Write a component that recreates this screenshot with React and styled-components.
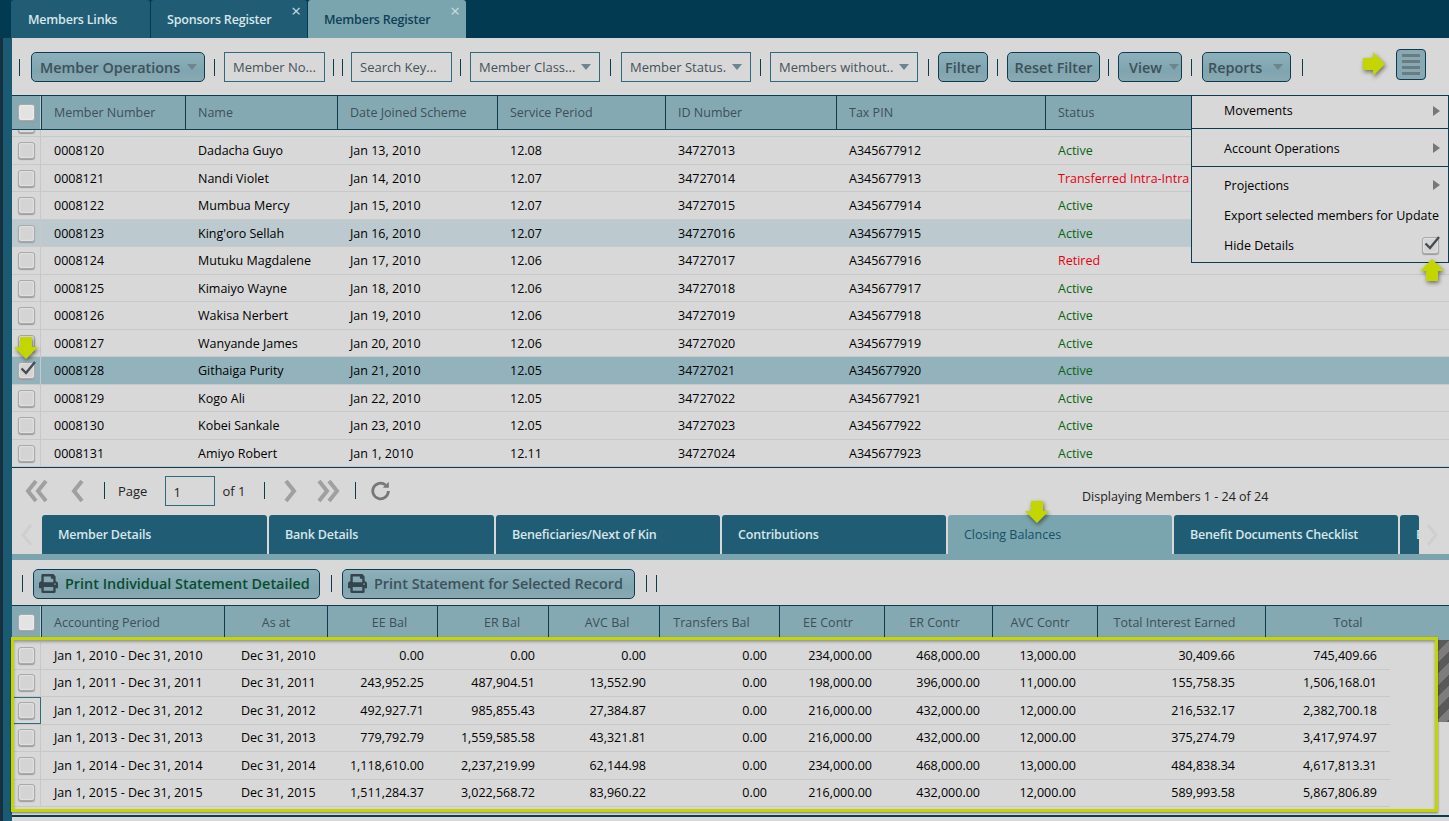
import React from "react";
import styled, { createGlobalStyle } from "styled-components";
import { FaPrint } from "react-icons/fa";

const ink = "#0d3b4f";
const head = "#84a9b3";
const panel = "#d8d8d8";

const GlobalStyle = createGlobalStyle`
  html, body { margin: 0; padding: 0; background: ${panel}; }
  body { font-family: "Open Sans", "Liberation Sans", sans-serif; font-size: 12.5px; color: #000; overflow: hidden; }
`;

const Page = styled.div`
  position: relative;
  width: 1449px;
  height: 821px;
  overflow: hidden;
  display: grid;
  grid-template-columns: 12px 1fr;
  grid-template-rows: 38px 1fr;
  background: ${panel};
`;
const TopBar = styled.div`
  grid-column: 1 / 3;
  display: flex;
  align-items: stretch;
  background: #023a52;
  padding-left: 11px;
`;
const TopTab = styled.div`
  position: relative;
  width: ${(p) => p.$w}px;
  margin-right: 1px;
  padding-left: ${(p) => p.$pl ?? 16}px;
  box-sizing: border-box;
  display: flex;
  align-items: center;
  font-size: 12.5px;
  font-weight: 600;
  letter-spacing: -0.2px;
  border-radius: 3px 3px 0 0;
  background: ${(p) => (p.$active ? "#7ba5ae" : "#205d74")};
  color: ${(p) => (p.$active ? "#0f3f58" : "#d7e6ea")};
`;
const CloseX = styled.span`
  position: absolute;
  top: 2px;
  right: 6px;
  font-size: 17px;
  line-height: 18px;
  font-weight: 400;
  letter-spacing: 0;
  color: #c9dde2;
`;
const Strip = styled.div`
  background: linear-gradient(90deg, #16303f 0 3px, #1a5a72 3px 100%);
`;
const Main = styled.div`
  display: flex;
  flex-direction: column;
  min-width: 0;
`;
const Toolbar = styled.div`
  height: ${(p) => p.$h}px;
  flex: none;
  display: flex;
  align-items: center;
  padding-left: ${(p) => p.$pad}px;
  padding-top: ${(p) => p.$top ?? 0}px;
  box-sizing: border-box;
`;
const Sep = styled.span`
  width: 1px;
  height: 17px;
  flex: none;
  background: ${ink};
  margin-left: ${(p) => p.$l ?? 9}px;
  margin-right: ${(p) => p.$r ?? 9}px;
`;
const Button = styled.div`
  width: ${(p) => p.$w}px;
  height: 30px;
  flex: none;
  box-sizing: border-box;
  display: flex;
  align-items: center;
  justify-content: ${(p) => p.$justify || "center"};
  gap: 7px;
  padding: 0 ${(p) => p.$pad ?? 0}px;
  border: 1px solid ${ink};
  border-radius: 5px;
  background: linear-gradient(180deg, #8db1bb 0%, #7fa5b0 62%, #8aa9b2 100%);
  font-size: 14.4px;
  font-weight: 600;
  color: ${(p) => p.$color || "#3f5058"};
  white-space: nowrap;
`;
const Caret = styled.span`
  width: 0;
  height: 0;
  border-left: 5px solid transparent;
  border-right: 5px solid transparent;
  border-top: 6px solid ${(p) => p.$color || "#6d858d"};
  flex: none;
`;
const Field = styled.div`
  width: ${(p) => p.$w}px;
  height: 30px;
  flex: none;
  box-sizing: border-box;
  display: flex;
  align-items: center;
  justify-content: space-between;
  padding: 0 8px;
  border: 1px solid #2f6a7d;
  background: ${panel};
  font-size: 13px;
  color: #44525a;
  white-space: nowrap;
`;
const MenuButton = styled.div`
  position: absolute;
  left: 1396px;
  top: 49px;
  width: 30px;
  height: 31px;
  box-sizing: border-box;
  border: 1px solid ${ink};
  border-radius: 4px;
  background: #86a9b3;
  display: flex;
  flex-direction: column;
  align-items: center;
  justify-content: center;
  gap: 3px;
  i {
    width: 18px;
    height: 3px;
    background: #6a7b82;
  }
`;
const GridWrap = styled.div`
  height: 373px;
  flex: none;
  box-sizing: border-box;
  overflow: hidden;
  border-bottom: 1px solid ${ink};
  position: relative;
`;
const HeadRow = styled.div`
  height: ${(p) => p.$h}px;
  box-sizing: border-box;
  display: grid;
  grid-template-columns: ${(p) => p.$cols};
  background: ${head};
  border-top: 1px solid ${ink};
  border-bottom: ${(p) => (p.$detail ? "none" : `1px solid ${ink}`)};
  color: #3e4f57;
  font-size: 12.5px;
`;
const HeadCell = styled.div`
  display: flex;
  align-items: center;
  justify-content: ${(p) => (p.$center ? "center" : "flex-start")};
  padding-left: ${(p) => (p.$center ? Math.max(0, (p.$shift || 0) * 2) : 12)}px;
  padding-right: ${(p) => Math.max(0, -(p.$shift || 0) * 2)}px;
  padding-bottom: ${(p) => (p.$lift ? 2 : 0)}px;
  border-left: 1px solid ${ink};
  white-space: nowrap;
  overflow: hidden;
  font-weight: 500;
`;
const BoxCell = styled.div`
  display: flex;
  align-items: center;
  justify-content: center;
  box-sizing: border-box;
  padding-bottom: ${(p) => (p.$lift ? 2 : 0)}px;
  border: ${(p) => (p.$focus ? `1px solid #2f6a7d` : "none")};
  border-right: 1px solid ${(p) => (p.$focus ? "#2f6a7d" : "#c8c8c8")};
`;
const Check = styled.span`
  position: relative;
  display: block;
  width: 15px;
  height: 15px;
  border: 1px solid #a9a9a9;
  border-radius: 3px;
  background: ${(p) => (p.$light ? "#e3e3e3" : "#d4d4d4")};
  box-shadow: inset 0 0 2px #fff, 0 1px 1px #9b9b9b;
  svg {
    position: absolute;
    left: -1px;
    top: -5px;
  }
`;
const Tick = () => (
  <svg width="20" height="20" viewBox="0 0 20 20">
    <path d="M3.5 10.5 L8 15 L17 4" fill="none" stroke="#454d52" strokeWidth="2.4" />
  </svg>
);
const Row = styled.div`
  height: 27.5px;
  box-sizing: border-box;
  display: grid;
  align-items: stretch;
  grid-template-columns: ${(p) => p.$cols};
  background: ${(p) => p.$bg || "transparent"};
  border-bottom: 1px solid #c8c8c8;
`;
const Cell = styled.div`
  display: flex;
  align-items: center;
  padding-left: ${(p) => p.$pl ?? 13}px;
  justify-content: ${(p) => (p.$right ? "flex-end" : "flex-start")};
  color: ${(p) => p.$color || "#000"};
  white-space: nowrap;
  overflow: hidden;
`;
/* the row scrolled off under the header: only its last few pixels show */
const ScrolledRow = styled(Row)`
  height: 7.4px;
  overflow: hidden;
  ${BoxCell} {
    align-items: flex-start;
    margin-top: -14px;
    overflow: visible;
  }
`;
const PopMenu = styled.div`
  position: absolute;
  left: 1191px;
  top: 95px;
  width: 258px;
  height: 168px;
  box-sizing: border-box;
  background: ${panel};
  border: 1px solid ${ink};
  display: flex;
  flex-direction: column;
  font-size: 12.5px;
  font-weight: 500;
  color: #000;
`;
const MenuItem = styled.div`
  height: ${(p) => p.$h}px;
  flex: none;
  display: flex;
  align-items: center;
  justify-content: space-between;
  white-space: nowrap;
  padding: ${(p) => p.$top ?? 0}px 9px ${(p) => p.$bottom ?? 0}px 32px;
  box-sizing: border-box;
  border-bottom: ${(p) => (p.$line ? `1px solid ${ink}` : "none")};
`;
const MenuArrow = styled.span`
  width: 0;
  height: 0;
  margin-right: -1px;
  border-top: 5px solid transparent;
  border-bottom: 5px solid transparent;
  border-left: 7px solid #777;
`;
const Pager = styled.div`
  height: 47px;
  flex: none;
  box-sizing: border-box;
  padding-bottom: 2px;
  display: flex;
  align-items: center;
  position: relative;
  font-size: 13px;
  color: #222;
`;
const PageInput = styled.div`
  width: 50px;
  height: 30px;
  box-sizing: border-box;
  border: 1px solid #2f6a7d;
  padding: 6px 0 0 7px;
  margin: 0 7px 0 18px;
`;
const PageIcon = styled.svg`
  flex: none;
  margin-left: ${(p) => p.$ml}px;
  fill: none;
  stroke: ${(p) => p.$stroke || "#a0a0a0"};
  stroke-width: ${(p) => p.$weight || 4};
`;
const Displaying = styled.div`
  position: absolute;
  left: 1070px;
  top: 20px;
  font-size: 12.5px;
  color: #222;
`;
const TabsRow = styled.div`
  height: 45px;
  flex: none;
  box-sizing: border-box;
  display: flex;
  align-items: stretch;
  padding: 0 0 6px 30px;
  gap: 2px;
  position: relative;
  &::after {
    content: "";
    position: absolute;
    left: 0;
    right: 0;
    bottom: 0;
    height: 6px;
    background: #7ba5ae;
  }
`;
const LowerTab = styled.div`
  width: ${(p) => p.$w}px;
  flex: none;
  box-sizing: border-box;
  display: flex;
  align-items: center;
  padding-left: 16px;
  overflow: hidden;
  white-space: nowrap;
  border-radius: 3px 3px 0 0;
  font-size: 12.5px;
  font-weight: ${(p) => (p.$active ? 500 : 600)};
  letter-spacing: ${(p) => (p.$active ? 0 : -0.2)}px;
  background: ${(p) => (p.$active ? "#7ba5ae" : "#205d74")};
  color: ${(p) => (p.$active ? "#15506a" : "#d7e6ea")};
`;
const TabChevron = styled.svg`
  position: absolute;
  top: 8px;
  left: ${(p) => p.$left}px;
  fill: none;
  stroke: #cfcfcf;
  stroke-width: 3;
`;
const DetailRows = styled.div`
  position: relative;
  flex: none;
  display: flex;
  height: 173px;
`;
const RowsCol = styled.div`
  width: 1378px;
  padding-top: 2px;
`;
const Stripes = styled.div`
  margin-left: 48px;
  width: 11px;
  height: 82px;
  background: repeating-linear-gradient(135deg, #5a5a5a 0 8px, #7d7d7d 8px 16px);
`;
const Footer = styled.div`
  flex: 1;
  border-top: 2px solid ${ink};
  margin-top: 2px;
`;
const Highlight = styled.div`
  position: absolute;
  left: 11px;
  top: 637px;
  width: 1427px;
  height: 175px;
  box-sizing: border-box;
  border: 3px solid #c4d600;
  box-shadow: inset 0 2px 3px rgba(0, 0, 0, 0.3), 0 1px 2px rgba(0, 0, 0, 0.45);
  pointer-events: none;
`;
const Arrow = styled.svg`
  position: absolute;
  left: ${(p) => p.$x}px;
  top: ${(p) => p.$y}px;
  filter: drop-shadow(1px 2px 2px rgba(0, 0, 0, 0.5));
`;

const LimeArrow = ({ x, y, rotate }) => (
  <Arrow $x={x} $y={y} width="24" height="24" viewBox="0 0 24 24">
    <path
      d="M1 6 H11 V0 L23 12 L11 24 V18 H1 Z"
      fill="#c4d600"
      transform={`rotate(${rotate} 12 12)`}
    />
  </Arrow>
);

const memberCols = "29px 144px 152px 160px 168px 171px 209px 1fr";
const members = [
  ["0008120", "Dadacha Guyo", "Jan 13, 2010", "12.08", "34727013", "A345677912", "Active"],
  ["0008121", "Nandi Violet", "Jan 14, 2010", "12.07", "34727014", "A345677913", "Transferred Intra-Intra"],
  ["0008122", "Mumbua Mercy", "Jan 15, 2010", "12.07", "34727015", "A345677914", "Active"],
  ["0008123", "King'oro Sellah", "Jan 16, 2010", "12.07", "34727016", "A345677915", "Active"],
  ["0008124", "Mutuku Magdalene", "Jan 17, 2010", "12.06", "34727017", "A345677916", "Retired"],
  ["0008125", "Kimaiyo Wayne", "Jan 18, 2010", "12.06", "34727018", "A345677917", "Active"],
  ["0008126", "Wakisa Nerbert", "Jan 19, 2010", "12.06", "34727019", "A345677918", "Active"],
  ["0008127", "Wanyande James", "Jan 20, 2010", "12.06", "34727020", "A345677919", "Active"],
  ["0008128", "Githaiga Purity", "Jan 21, 2010", "12.05", "34727021", "A345677920", "Active"],
  ["0008129", "Kogo Ali", "Jan 22, 2010", "12.05", "34727022", "A345677921", "Active"],
  ["0008130", "Kobei Sankale", "Jan 23, 2010", "12.05", "34727023", "A345677922", "Active"],
  ["0008131", "Amiyo Robert", "Jan 1, 2010", "12.11", "34727024", "A345677923", "Active"],
];
const memberHead = ["Member Number", "Name", "Date Joined Scheme", "Service Period", "ID Number", "Tax PIN", "Status"];

const balanceHeadCols = "29px 183px 103px 110px 111px 111px 120px 105px 108px 105px 168px 165px";
const balanceRowCols = "29px 183px 103px 97px 111px 111px 121px 105px 108px 96px 159px 142px";
const balanceHead = [
  ["Accounting Period", false, 0],
  ["As at", true, 0],
  ["EE Bal", true, 7],
  ["ER Bal", true, 9],
  ["AVC Bal", true, 3],
  ["Transfers Bal", true, -8],
  ["EE Contr", true, -4],
  ["ER Contr", true, -4],
  ["AVC Contr", true, -5],
  ["Total Interest Earned", true, -7],
  ["Total", true, 0],
];
const balances = [
  ["Jan 1, 2010 - Dec 31, 2010", "Dec 31, 2010", "0.00", "0.00", "0.00", "0.00", "234,000.00", "468,000.00", "13,000.00", "30,409.66", "745,409.66"],
  ["Jan 1, 2011 - Dec 31, 2011", "Dec 31, 2011", "243,952.25", "487,904.51", "13,552.90", "0.00", "198,000.00", "396,000.00", "11,000.00", "155,758.35", "1,506,168.01"],
  ["Jan 1, 2012 - Dec 31, 2012", "Dec 31, 2012", "492,927.71", "985,855.43", "27,384.87", "0.00", "216,000.00", "432,000.00", "12,000.00", "216,532.17", "2,382,700.18"],
  ["Jan 1, 2013 - Dec 31, 2013", "Dec 31, 2013", "779,792.79", "1,559,585.58", "43,321.81", "0.00", "216,000.00", "432,000.00", "12,000.00", "375,274.79", "3,417,974.97"],
  ["Jan 1, 2014 - Dec 31, 2014", "Dec 31, 2014", "1,118,610.00", "2,237,219.99", "62,144.98", "0.00", "234,000.00", "468,000.00", "13,000.00", "484,838.34", "4,617,813.31"],
  ["Jan 1, 2015 - Dec 31, 2015", "Dec 31, 2015", "1,511,284.37", "3,022,568.72", "83,960.22", "0.00", "216,000.00", "432,000.00", "12,000.00", "589,993.58", "5,867,806.89"],
];
const lowerTabs = [
  ["Member Details", 225],
  ["Bank Details", 225],
  ["Beneficiaries/Next of Kin", 224],
  ["Contributions", 224],
  ["Closing Balances", 224, true],
  ["Benefit Documents Checklist", 224],
  ["Benefits", 19],
];

const statusColor = (s) => (s === "Active" ? "#0b6410" : "#e8000f");
const rowBg = (i) => (i === 3 ? "#bcc9cf" : i === 8 ? "#93b3bc" : undefined);

const Chevron = ({ ml, dir, double, size = 24 }) => (
  <PageIcon $ml={ml} width={double ? size : 14} height={size} viewBox={`0 0 ${double ? size : 14} 24`}>
    {dir === "left" ? (
      <>
        <path d="M11 2 L3 12 L11 22" />
        {double && <path d="M21 2 L13 12 L21 22" />}
      </>
    ) : (
      <>
        <path d="M3 2 L11 12 L3 22" />
        {double && <path d="M13 2 L21 12 L13 22" />}
      </>
    )}
  </PageIcon>
);

export default function App() {
  return (
    <Page>
      <GlobalStyle />
      <TopBar>
        <TopTab $w={139} $pl={17}>
          Members Links
        </TopTab>
        <TopTab $w={156}>
          Sponsors Register
          <CloseX>×</CloseX>
        </TopTab>
        <TopTab $w={158} $active>
          Members Register
          <CloseX>×</CloseX>
        </TopTab>
      </TopBar>
      <Strip />
      <Main>
        <Toolbar $h={57} $pad={7} $top={1}>
          <Sep $l={0} $r={11} />
          <Button $w={174} $justify="flex-start" $pad={8}>
            Member Operations <Caret />
          </Button>
          <Sep />
          <Field $w={101}>Member No...</Field>
          <Sep $l={8} $r={8} />
          <Sep $l={0} $r={8} />
          <Field $w={101}>Search Key...</Field>
          <Sep $l={8} />
          <Field $w={130}>
            Member Class... <Caret />
          </Field>
          <Sep $l={10} $r={10} />
          <Field $w={130}>
            Member Status. <Caret />
          </Field>
          <Sep />
          <Field $w={148}>
            Members without.. <Caret />
          </Field>
          <Sep $l={10} $r={9} />
          <Button $w={50}>Filter</Button>
          <Sep />
          <Button $w={93}>Reset Filter</Button>
          <Sep $l={8} />
          <Button $w={64} $justify="flex-start" $pad={10}>
            View <Caret />
          </Button>
          <Sep $r={10} />
          <Button $w={89} $justify="flex-start" $pad={5}>
            Reports&nbsp; <Caret />
          </Button>
          <Sep $l={11} />
        </Toolbar>
        <GridWrap>
          <HeadRow $h={35} $cols={memberCols}>
            <BoxCell>
              <Check $light />
            </BoxCell>
            {memberHead.map((h) => (
              <HeadCell key={h}>{h}</HeadCell>
            ))}
          </HeadRow>
          <ScrolledRow $cols={memberCols}>
            <BoxCell>
              <Check />
            </BoxCell>
          </ScrolledRow>
          {members.map((m, i) => (
            <Row key={m[0]} $cols={memberCols} $bg={rowBg(i)}>
              <BoxCell>
                <Check>{i === 8 && <Tick />}</Check>
              </BoxCell>
              {m.map((v, j) => (
                <Cell key={j} $color={j === 6 ? statusColor(v) : undefined}>
                  {v}
                </Cell>
              ))}
            </Row>
          ))}
        </GridWrap>
        <Pager>
          <Chevron ml={13} dir="left" double />
          <Chevron ml={22} dir="left" />
          <Sep $l={19} $r={13} />
          Page
          <PageInput>1</PageInput>
          of 1
          <Sep $l={19} $r={0} />
          <Chevron ml={18} dir="right" />
          <Chevron ml={19} dir="right" double />
          <Sep $l={15} $r={0} />
          <PageIcon $ml={14} $stroke="#777" $weight={3} width="22" height="22" viewBox="0 0 24 24">
            <path d="M20 12 A8.5 8.5 0 1 1 17 5.5" />
            <path d="M20.5 2 V8.5 H14" fill="#777" stroke="none" />
          </PageIcon>
          <Displaying>Displaying Members 1 - 24 of 24</Displaying>
        </Pager>
        <TabsRow>
          <TabChevron $left={8} width="14" height="24" viewBox="0 0 14 24">
            <path d="M11 2 L3 12 L11 22" />
          </TabChevron>
          {lowerTabs.map(([t, w, active]) => (
            <LowerTab key={t} $w={w} $active={active}>
              {t}
            </LowerTab>
          ))}
          <TabChevron $left={1413} width="14" height="24" viewBox="0 0 14 24">
            <path d="M3 2 L11 12 L3 22" />
          </TabChevron>
        </TabsRow>
        <Toolbar $h={45} $pad={10} $top={2}>
          <Sep $l={0} $r={10} />
          <Button $w={287} $justify="flex-start" $pad={5} $color="#0a4d2e">
            <FaPrint size={19} color="#36454c" />
            Print Individual Statement Detailed
          </Button>
          <Sep $l={11} $r={10} />
          <Button $w={293} $justify="flex-start" $pad={5}>
            <FaPrint size={19} color="#36454c" />
            Print Statement for Selected Record
          </Button>
          <Sep $l={11} $r={9} />
          <Sep $l={0} $r={0} />
        </Toolbar>
        <HeadRow $h={35} $cols={balanceHeadCols} $detail>
          <BoxCell $lift>
            <Check $light />
          </BoxCell>
          {balanceHead.map(([h, center, shift]) => (
            <HeadCell key={h} $center={center} $shift={shift} $lift>
              {h}
            </HeadCell>
          ))}
        </HeadRow>
        <DetailRows>
          <RowsCol>
            {balances.map((b, i) => (
              <Row key={b[0]} $cols={balanceRowCols}>
                <BoxCell $focus={i === 2}>
                  <Check />
                </BoxCell>
                {b.map((v, j) =>
                  j === 1 ? (
                    <Cell key={j} $pl={17}>
                      {v}
                    </Cell>
                  ) : j === 0 ? (
                    <Cell key={j}>{v}</Cell>
                  ) : (
                    <Cell key={j} $right $pl={0}>
                      {v}
                    </Cell>
                  )
                )}
              </Row>
            ))}
          </RowsCol>
          <Stripes />
        </DetailRows>
        <Footer />
      </Main>
      <MenuButton>
        <i />
        <i />
        <i />
        <i />
      </MenuButton>
      <PopMenu>
        <MenuItem $h={33} $line $bottom={3}>
          Movements <MenuArrow />
        </MenuItem>
        <MenuItem $h={38} $line $top={1}>
          Account Operations <MenuArrow />
        </MenuItem>
        <MenuItem $h={36}>
          Projections <MenuArrow />
        </MenuItem>
        <MenuItem $h={24}>Export selected members for Update</MenuItem>
        <MenuItem $h={36}>
          Hide Details
          <Check>
            <Tick />
          </Check>
        </MenuItem>
      </PopMenu>
      <Highlight />
      <LimeArrow x={1362} y={52} rotate={0} />
      <LimeArrow x={1420} y={258} rotate={-90} />
      <LimeArrow x={14} y={336} rotate={90} />
      <LimeArrow x={1025} y={500} rotate={90} />
    </Page>
  );
}
